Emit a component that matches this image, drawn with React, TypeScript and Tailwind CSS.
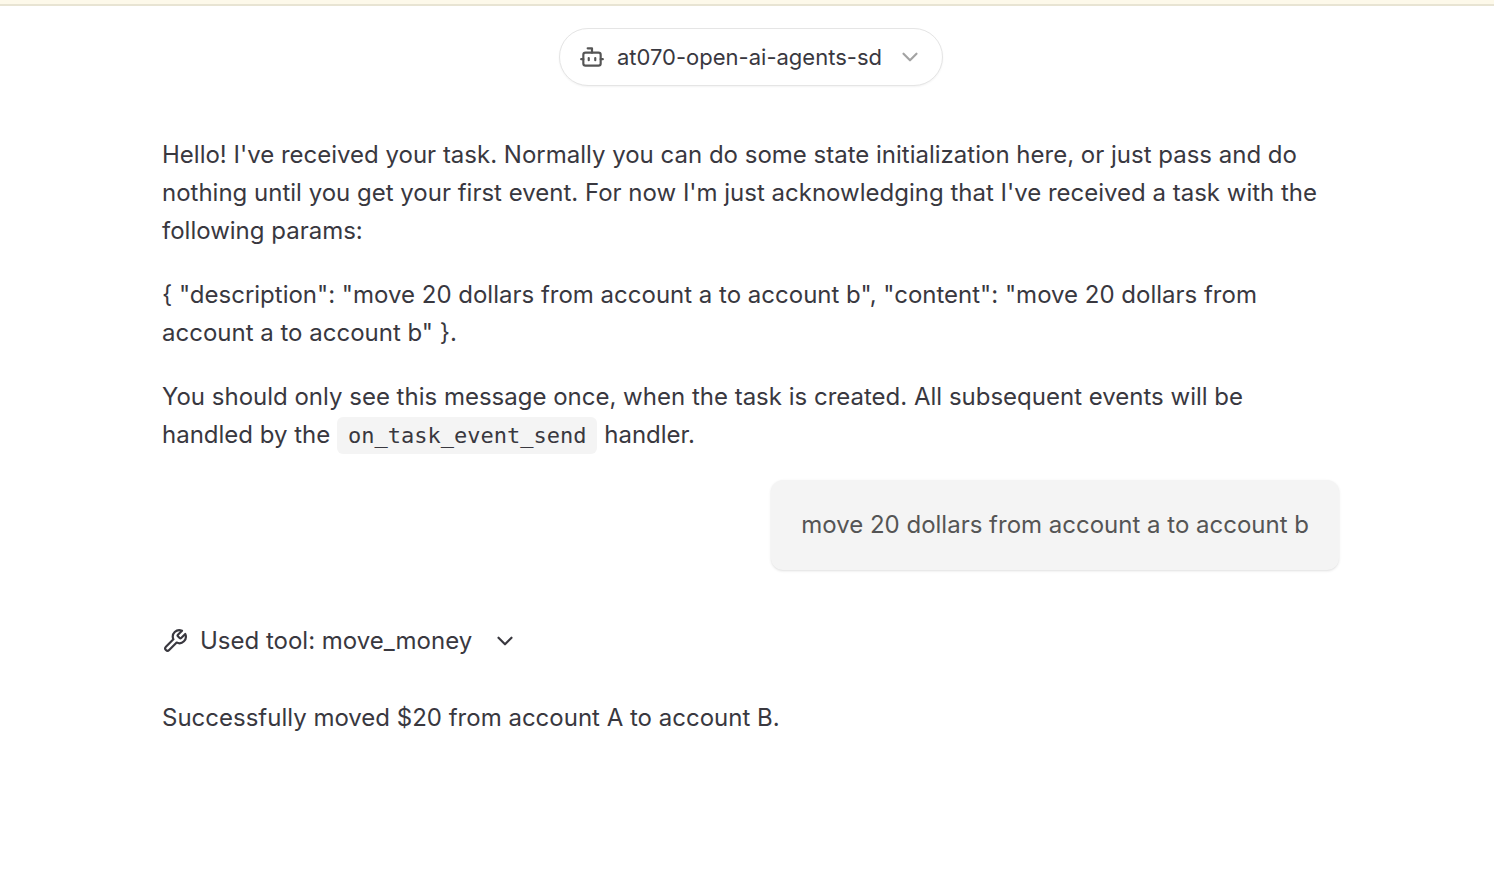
import React from 'react';
import { Bot, ChevronDown } from 'lucide-react';
import { LuWrench } from 'react-icons/lu';

function AgentPicker() {
  return (
    <button
      type="button"
      className="flex h-[58px] items-center rounded-full border border-[#e5e5e5] bg-white px-[19px] text-[#39383f] shadow-xs"
    >
      <Bot size={26} strokeWidth={2} className="mr-3 text-[#555]" />
      <span className="text-[22px] leading-7">at070-open-ai-agents-sd</span>
      <ChevronDown size={26} strokeWidth={2} className="ml-[15px] text-[#a3a3a3]" />
    </button>
  );
}

function UserMessage({ text }: { text: string }) {
  return (
    <div className="mt-[26px] self-end rounded-xl bg-[#f4f4f4] px-[30px] py-[26px] text-[#555] shadow-sm">
      {text}
    </div>
  );
}

function ToolCall({ name }: { name: string }) {
  return (
    <button type="button" className="mt-[52px] flex items-center self-start">
      <LuWrench size={26} className="mr-3" />
      <span>Used tool: {name}</span>
      <ChevronDown size={26} strokeWidth={2} className="ml-5" />
    </button>
  );
}

export default function App() {
  return (
    <div className="min-h-screen bg-white font-['Inter',sans-serif] text-[#39383f]">
      <div className="h-1.5 border-b-2 border-[#e8e4d3] bg-[#fdf9ea]" />

      <header className="flex justify-center pt-[22px] pl-2">
        <AgentPicker />
      </header>

      <main className="flex flex-col pt-[50px] pr-[155px] pl-[162px] text-2xl leading-[38px]">
        <div className="space-y-[26px]">
          <p>
            Hello! I've received your task. Normally you can do some state initialization here, or just pass and do
            nothing until you get your first event. For now I'm just acknowledging that I've received a task with the
            following params:
          </p>
          <p>
            {'{ "description": "move 20 dollars from account a to account b", "content": "move 20 dollars from account a to account b" }.'}
          </p>
          <p>
            You should only see this message once, when the task is created. All subsequent events will be handled by
            the{' '}
            <code className="inline-block rounded-md bg-[#f4f4f4] px-[11px] py-1.5 font-['DejaVu_Sans_Mono',monospace] text-[22px] leading-[25px]">
              on_task_event_send
            </code>{' '}
            handler.
          </p>
        </div>

        <UserMessage text="move 20 dollars from account a to account b" />
        <ToolCall name="move_money" />
        <p className="mt-[39px]">Successfully moved $20 from account A to account B.</p>
      </main>
    </div>
  );
}
